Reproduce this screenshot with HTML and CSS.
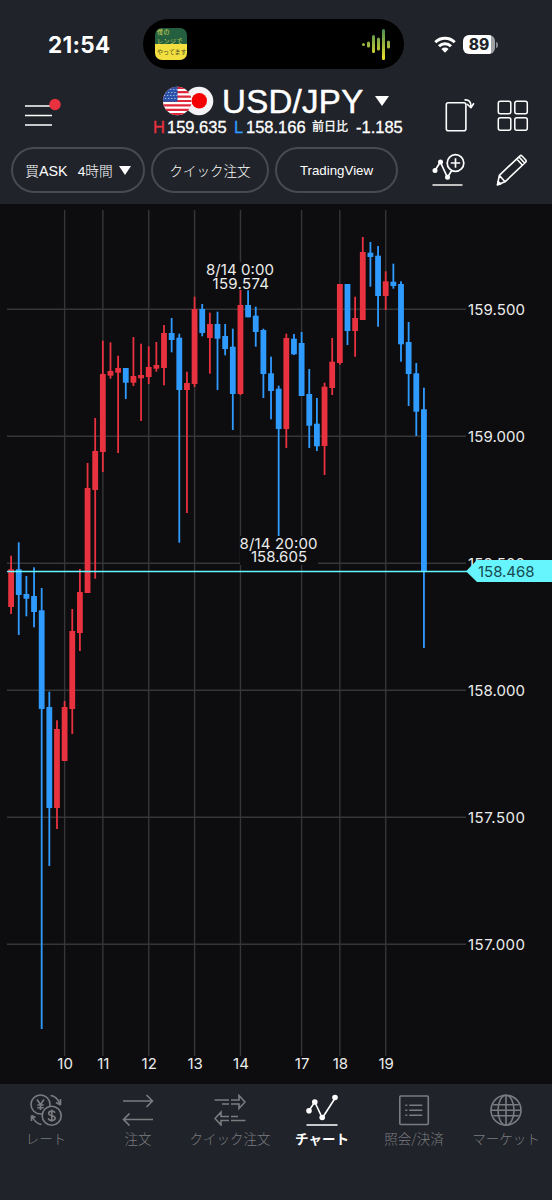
FILE: index.html
```html
<!DOCTYPE html>
<html lang="ja">
<head>
    <meta charset="UTF-8">
    <meta name="viewport" content="width=device-width, initial-scale=1.0">
    <title>USD/JPY チャート</title>

    <link rel="stylesheet" href="styles.css">
</head>
<body>
    <header class="header">
        <div class="status">
            <div class="time">21:54</div>
            <div class="island">
                <div class="artwork">
                    <span>僕の</span>
                    <span>レンジで</span>
                    <span class="dark">やってます</span>
                </div>
                <svg class="wave" width="30" height="32" viewBox="0 0 30 32">
                    <defs>
                        <linearGradient id="wave-color" gradientUnits="userSpaceOnUse" x1="0" y1="0" x2="0" y2="32">
                            <stop offset="0" stop-color="#3f8a55"/>
                            <stop offset="1" stop-color="#f2e02a"/>
                        </linearGradient>
                    </defs>
                    <g fill="url(#wave-color)">
                        <rect x="1" y="15" width="3" height="3" rx="1.5"/>
                        <rect x="6" y="13.500" width="3" height="6" rx="1.500"/>
                        <rect x="11" y="7" width="3" height="18" rx="1.500"/>
                        <rect x="16" y="9.500" width="3" height="13" rx="1.500"/>
                        <rect x="21" y="1" width="3" height="31" rx="1.500"/>
                        <rect x="26" y="12.500" width="3" height="8" rx="1.500"/>
                    </g>
                </svg>
            </div>
            <div class="signals">
                <svg width="22" height="17" viewBox="0 0 22 17">
                    <g fill="none" stroke="#fff" stroke-width="3">
                        <path d="M1.300 6.200a13.800 13.800 0 0 1 19.400 0"/>
                        <path d="M5 10.200a8.600 8.600 0 0 1 12 0"/>
                    </g>
                    <path fill="#fff" d="M7.400 13a5.200 5.200 0 0 1 7.200 0L11 16.700z"/>
                </svg>
                <div class="battery">89</div>
                <div class="battery-tip"></div>
            </div>
        </div>

        <div class="title-row">
            <div class="menu">
                <svg width="38" height="30" viewBox="0 0 38 30">
                    <path d="M1 8h27M1 17.500h27M1 27h27" stroke="#fff" stroke-width="1.700"/>
                    <circle cx="31" cy="6.500" r="5.700" fill="#e8323f"/>
                </svg>
            </div>
            <div class="symbol">
                <div class="pair">
                    <svg width="52" height="30" viewBox="0 0 52 30">
                        <defs>
                            <clipPath id="us"><circle cx="15.300" cy="15" r="14.300"/></clipPath>
                        </defs>
                        <circle cx="37" cy="15" r="14.300" fill="#f4f4f6"/>
                        <circle cx="37.300" cy="14.700" r="7.700" fill="#f50000"/>
                        <g clip-path="url(#us)">
                            <rect width="30" height="30" fill="#fff"/>
                            <path d="M0 1.800h30M0 6.200h30M0 10.600h30M0 15h30M0 19.400h30M0 23.800h30M0 28.200h30" stroke="#e0263a" stroke-width="2.200"/>
                            <rect width="15.500" height="15.800" fill="#2a52a8"/>
                            <path d="M2 3.500h13M3 6.500h12M2 9.500h13M3 12.500h12" stroke="#b7c6e8" stroke-width="1.100" stroke-dasharray="1.200 1.900"/>
                        </g>
                    </svg>
                    <span class="pair-name">USD/JPY</span>
                    <svg class="caret" width="14" height="10" viewBox="0 0 14 10"><path d="M0 0h14L7 10z" fill="#fff"/></svg>
                </div>
                <div class="prices">
                    <span class="high">H</span><span class="high-value">159.635</span>
                    <span class="low">L</span><span class="low-value">158.166</span>
                    <span class="diff">前日比</span><span>-1.185</span>
                </div>
            </div>
            <svg class="rotate" width="30" height="34" viewBox="0 0 30 34" fill="none" stroke="#fff" stroke-width="1.600">
                <rect x="1.300" y="4.800" width="19.600" height="28" rx="2"/>
                <path d="M19.500 1.900c4.500-.5 6.700 2 6.500 7M22 6l3.900 3.700 3-4.400" stroke-linejoin="round"/>
            </svg>
            <svg class="layout" width="32" height="32" viewBox="0 0 32 32" fill="none" stroke="#fff" stroke-width="1.500">
                <rect x="1.300" y="1.300" width="12.500" height="12.500" rx="2"/>
                <rect x="17.800" y="1.300" width="12.500" height="12.500" rx="2"/>
                <rect x="1.300" y="17.800" width="12.500" height="12.500" rx="2"/>
                <rect x="17.800" y="17.800" width="12.500" height="12.500" rx="2"/>
            </svg>
        </div>

        <div class="tools">
            <div class="pill pill-period">
                <span>買<span class="latin">ASK</span></span><span class="period">4時間</span>
                <svg width="12" height="9" viewBox="0 0 12 9"><path d="M0 0h12L6 9z" fill="#fff"/></svg>
            </div>
            <div class="pill pill-quick">クイック注文</div>
            <div class="pill pill-tv">TradingView</div>
            <svg class="indicator" width="34" height="34" viewBox="0 0 34 34" fill="none" stroke="#fff" stroke-width="1.700">
                <path d="M3 17.500L8.300 9l7.200 15.500 4.500-7.500"/>
                <g fill="#fff" stroke="none">
                    <circle cx="3" cy="17.500" r="2.500"/>
                    <circle cx="8.500" cy="9" r="2.500"/>
                    <circle cx="15.500" cy="24.300" r="2.500"/>
                </g>
                <circle cx="23.500" cy="10" r="8.300"/>
                <path d="M23.500 5.300v9.400M18.800 10h9.400"/>
                <path d="M.5 32h30" stroke="#ddd"/>
            </svg>
            <svg class="pencil" width="32" height="32" viewBox="0 0 32 32" fill="none" stroke="#fff" stroke-width="1.600" stroke-linejoin="round">
                <path d="M1.500 30.800l1.800-9.500L24 1.800Q25 1 26 2l3.800 4q.8 1 0 2L9 27.800zM3.300 21.300L9 27.800M20.800 5l5.700 6.200M23 3l5.700 6"/>
                <path d="M1.500 30.800l.6-3.300 2.600 2.400z" fill="#fff"/>
            </svg>
        </div>
    </header>

    <main>
        <svg class="chart" id="chart" width="552" height="880" viewBox="0 204 552 880">
            <g id="grid" class="grid"></g>
            <g id="candles"></g>
            <g class="note">
                <rect x="205" y="262" width="70" height="28"/>
                <text x="206" y="274.500" textLength="68">8/14 0:00</text>
                <text x="212.500" y="288.500" textLength="56.500">159.574</text>
                <rect x="240" y="536" width="78" height="29"/>
                <text x="239.500" y="548.500" textLength="78">8/14 20:00</text>
                <text x="251" y="562" textLength="56">158.605</text>
            </g>
            <g id="labels" class="labels"></g>
            <path d="M7 571.500h460" stroke="#66f5fc" stroke-width="1.500"/>
            <path d="M466 571.300l11-11.300h75v22h-75z" fill="#66f5fc"/>
            <text class="current" x="478" y="577" textLength="56.500">158.468</text>
        </svg>
    </main>

    <nav class="tabs">
        <div class="tab">
            <svg width="32" height="32" viewBox="0 0 32 32">
                <circle cx="10.500" cy="10.500" r="9.500"/>
                <circle cx="21.700" cy="21.700" r="9.500" class="front"/>
                <path d="M7 5.500l3.500 5 3.500-5M10.500 10.500v5.500M7.300 11h6.400M7.300 13.700h6.400"/>
                <path d="M25 18.800c-.8-2.300-6.200-2.300-6.400.5 0 3.200 6.600 1.600 6.600 4.900-.2 3-6 2.900-7 .2M21.800 15.800v12"/>
                <path d="M20.500 1.500Q27 2 30.500 11V5M30.500 11l-4.500-2.500M11.500 30.500Q5 29.500 1.500 21.500V27M1.500 21.500l4 2"/>
            </svg>
            <span>レート</span>
        </div>
        <div class="tab">
            <svg width="32" height="32" viewBox="0 0 32 32">
                <path d="M1 7h29.500M24.500 1l6 6-6 6M31 25.500H1.500M7.500 19.500l-6 6 6 6"/>
            </svg>
            <span>注文</span>
        </div>
        <div class="tab">
            <svg width="32" height="32" viewBox="0 0 32 32">
                <path d="M.5 6h14.500M8 10h7M17 6h8V1.500L31 8l-6 6.500V10h-8M31.500 26.500H17M24 22.500h-7M15 26.500H7V31l-6-6.500L7 18v4.500h8"/>
            </svg>
            <span>クイック注文</span>
        </div>
        <div class="tab active">
            <svg width="32" height="32" viewBox="0 0 32 32">
                <path d="M3 16.500L8.800 8l7.500 16L29.500 3.500M.5 31h31"/>
                <g class="dots">
                    <circle cx="3" cy="16.700" r="2.800"/>
                    <circle cx="8.800" cy="8" r="2.800"/>
                    <circle cx="16.200" cy="23.500" r="2.800"/>
                    <circle cx="29" cy="3.500" r="2.800"/>
                </g>
            </svg>
            <span>チャート</span>
        </div>
        <div class="tab">
            <svg width="32" height="32" viewBox="0 0 32 32">
                <rect x="1.800" y="2" width="28.500" height="28.500" rx="1"/>
                <path d="M7.300 11.300h2M11.300 11.300h13M7.300 16.300h2M11.300 16.300h13M7.300 21.300h2M11.300 21.300h13"/>
            </svg>
            <span>照会/決済</span>
        </div>
        <div class="tab">
            <svg width="32" height="32" viewBox="0 0 32 32">
                <circle cx="16" cy="16.200" r="15"/>
                <ellipse cx="16" cy="16.200" rx="8" ry="15"/>
                <path d="M16 1.200v30M1 16.200h30M3.200 10.700h25.600M3.200 21.700h25.600"/>
            </svg>
            <span>マーケット</span>
        </div>
    </nav>

    <script src="chart.js"></script>
</body>
</html>
```
FILE: styles.css
```css
body {
    margin: 0;
    width: 552px;
    height: 1200px;
    overflow: hidden;
    background: #202329;
    color: #fff;
    font-family: "Liberation Sans", "Noto Sans CJK JP", sans-serif;
}

svg {
    display: block;
    flex: none;
}

.header {
    height: 204px;
    background: #202329;
}

/* Status bar */
.status {
    display: grid;
    grid-template-columns: 143px 261px 1fr;
    height: 67px;
    padding-top: 19px;
}

.time {
    padding: 12px 0 0 48px;
    font: 700 22.5px/28px Inter, sans-serif;
    letter-spacing: 0.3px;
}

.island {
    display: flex;
    justify-content: space-between;
    align-items: center;
    box-sizing: border-box;
    height: 50px;
    padding: 0 13px 0 12px;
    border-radius: 25px;
    background: #000;
}

.artwork {
    width: 32px;
    height: 32px;
    overflow: hidden;
    border-radius: 7px;
    background: linear-gradient(#24603f 50%, #f3df3f 50%);
    color: #d8dc58;
    font: 6px/10px "Noto Sans CJK JP", sans-serif;
}

.artwork span {
    display: block;
    margin-left: 2px;
    white-space: nowrap;
    letter-spacing: 0.5px;
}

.artwork span:first-child {
    line-height: 8px;
}

.artwork .dark {
    margin-top: 1px;
    color: #4b5424;
    letter-spacing: 0;
}

.signals {
    display: flex;
    align-items: center;
    height: 51px;
    padding-left: 30px;
}

.battery {
    width: 32px;
    height: 19px;
    margin-left: 7px;
    border-radius: 6px;
    background: linear-gradient(90deg, #fff 89%, #a0a1a4 89%);
    color: #202329;
    font: 800 15.5px/19px Inter, sans-serif;
    text-align: center;
}

.battery-tip {
    width: 2px;
    height: 6px;
    margin-left: 1px;
    border-radius: 0 3px 3px 0;
    background: #85878a;
}

/* Symbol and prices */
.title-row {
    display: flex;
    height: 54px;
}

.menu {
    width: 129px;
    padding: 12px 0 0 24px;
}

.symbol {
    width: 292px;
}

.pair {
    display: flex;
    height: 32px;
    padding-left: 9px;
}

.pair-name {
    margin-left: 8px;
    font-size: 33px;
    line-height: 32px;
    letter-spacing: 0.3px;
    -webkit-text-stroke: 0.5px #fff;
}

.caret {
    margin: 10px 0 0 12px;
}

.prices {
    display: flex;
    font-size: 16.5px;
    line-height: 18px;
    white-space: nowrap;
    -webkit-text-stroke: 0.3px;
}

.high {
    width: 14px;
    color: #e8323f;
}

.high-value {
    width: 67px;
}

.low {
    width: 12px;
    color: #2f9bff;
}

.low-value {
    width: 66px;
}

.diff {
    width: 44px;
    font-size: 12px;
}

.rotate {
    margin-top: 12px;
}

.layout {
    margin: 14px 0 0 22px;
}

/* Toolbar */
.tools {
    display: flex;
    padding: 7px 0 0 11px;
}

.pill {
    display: flex;
    justify-content: center;
    align-items: center;
    box-sizing: border-box;
    height: 46px;
    border: 2px solid #474a52;
    border-radius: 23px;
    font-size: 13.5px;
    white-space: nowrap;
}

.pill-period {
    width: 134px;
    font-size: 13.7px;
    font-weight: 300;
}

.latin {
    font-size: 14.3px;
}

.period {
    margin: 0 6px 0 10px;
}

.pill-quick {
    width: 118px;
    margin-left: 6px;
    font-weight: 300;
}

.pill-tv {
    width: 123px;
    margin-left: 6px;
    font-size: 13.3px;
}

.indicator {
    margin: 6px 0 0 34px;
}

.pencil {
    margin: 7px 0 0 30px;
}

/* Chart */
.chart {
    background: #0d0d0f;
    font-family: Inter, sans-serif;
    font-size: 15px;
}

.grid {
    stroke: #363639;
    stroke-width: 1.4;
}

.up {
    fill: #e8323f;
}

.down {
    fill: #2f9bff;
}

.note rect {
    fill: #0d0d0f;
}

.note text,
.labels text {
    fill: #ececec;
}

.labels .day {
    text-anchor: middle;
}

.current {
    fill: #174a50;
}

/* Bottom navigation */
.tabs {
    display: flex;
    height: 116px;
    background: #202329;
}

.tab {
    display: flex;
    flex-direction: column;
    align-items: center;
    width: 92px;
    padding-top: 10px;
    color: #7b7c80;
    font: 300 13.5px/20px "Noto Sans CJK JP", sans-serif;
    white-space: nowrap;
}

.tab svg {
    margin-bottom: 2px;
    fill: none;
    stroke: currentColor;
    stroke-width: 1.6;
}

.tab .front {
    fill: #202329;
}

.tab.active {
    color: #fff;
    font-weight: 700;
}

.tab .dots {
    fill: #fff;
    stroke: none;
}
```
FILE: chart.js
```javascript
// direction, wick top, body top, body bottom, wick bottom
const candles = [
    ["up", 555.7, 569.3, 607, 614],
    ["down", 542.3, 569.3, 595, 635],
    ["down", 576, 594, 598.7, 616.3],
    ["down", 567.3, 596, 612, 627.3],
    ["down", 588, 610.3, 709, 1029],
    ["down", 691.7, 707, 808, 866],
    ["up", 720.3, 729, 808, 829],
    ["up", 701, 707, 761, 761],
    ["up", 609, 631, 709, 734],
    ["up", 569, 592, 633, 651],
    ["up", 463, 488, 593, 593],
    ["up", 418, 451, 490, 578.7],
    ["up", 340.7, 374, 452, 472],
    ["up", 342.3, 371, 375.7, 378.7],
    ["up", 355.7, 368, 372.7, 453],
    ["down", 368, 368, 382.7, 399],
    ["up", 337, 376, 382.7, 386],
    ["up", 343.7, 375, 378.3, 421],
    ["up", 346.3, 367, 377, 384],
    ["up", 342, 365, 368.7, 371.7],
    ["up", 325, 333, 368, 385.3],
    ["down", 318, 333, 340, 352.3],
    ["down", 333.7, 337.7, 390, 542.7],
    ["up", 371.7, 383, 390, 513],
    ["up", 296.7, 309, 384, 387],
    ["down", 304, 309, 333, 336.3],
    ["up", 312.7, 324, 338, 373.7],
    ["down", 311.7, 324, 338.7, 390],
    ["down", 324, 336, 349, 355.3],
    ["down", 328.7, 346.7, 394, 430],
    ["up", 290, 305, 394, 395],
    ["down", 290.3, 305, 317.3, 317.3],
    ["down", 306.7, 315.7, 332, 346.7],
    ["down", 328.7, 330, 374, 398],
    ["down", 356.7, 373.3, 391, 419.3],
    ["down", 385.7, 388.7, 429, 536],
    ["up", 333.7, 338, 429, 448],
    ["down", 334, 338.7, 354.3, 355],
    ["down", 332, 343, 396, 396],
    ["down", 369, 394, 425.7, 448],
    ["down", 398, 423.7, 446.3, 451],
    ["up", 382.7, 386.7, 446, 475],
    ["up", 338, 361.7, 388, 395],
    ["up", 284, 284, 363, 364.7],
    ["down", 284, 284, 331, 345],
    ["up", 296.7, 318, 331, 356.7],
    ["up", 237, 252, 320, 320],
    ["down", 242, 252.7, 257, 286.7],
    ["down", 246, 255.7, 296, 326.7],
    ["up", 271.3, 281.3, 296, 310],
    ["down", 263.7, 281.7, 286, 288.7],
    ["down", 281.3, 284, 344.3, 361.7],
    ["down", 322, 342, 374, 406],
    ["down", 363, 373.3, 411.7, 436],
    ["down", 387.7, 409.3, 571, 648]
];

const days = { 10: 7, 11: 12, 12: 18, 13: 24, 14: 30, 17: 38, 18: 43, 19: 49 };
const levels = ["159.500", "159.000", "158.500", "158.000", "157.500", "157.000"];

const candleX = (i) => 11.1 + i * 7.645;

let grid = "";
let labels = "";

levels.forEach((level, i) => {
    const y = 309.3 + i * 127;
    grid += `<path d="M7 ${y}H466"/>`;
    labels += `<text x="468" y="${y + 5.2}" textLength="57">${level}</text>`;
});

for (const day in days) {
    const x = candleX(days[day]);
    grid += `<path d="M${x} 210V1056"/>`;
    labels += `<text class="day" x="${x + 0.5}" y="1068.7">${day}</text>`;
}

document.getElementById("grid").innerHTML = grid;
document.getElementById("labels").innerHTML = labels;

document.getElementById("candles").innerHTML = candles.map(([dir, high, top, bottom, low], i) => {
    const x = candleX(i);
    return `<g class="${dir}">
        <rect x="${x - 0.9}" y="${high}" width="1.8" height="${low - high}"/>
        <rect x="${x - 2.9}" y="${top}" width="5.8" height="${bottom - top}"/>
    </g>`;
}).join("");
```
